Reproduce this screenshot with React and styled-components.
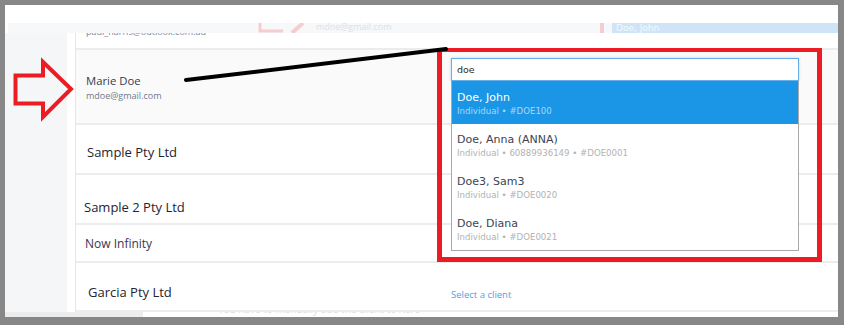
import React from "react";
import styled, { createGlobalStyle } from "styled-components";

const GlobalStyle = createGlobalStyle`
  html, body { margin: 0; padding: 0; background: #fff; }
  body { font-family: "Open Sans", "DejaVu Sans", sans-serif; }
`;

const Frame = styled.div`
  position: relative;
  width: 844px;
  height: 325px;
  box-sizing: border-box;
  border-style: solid;
  border-color: #878787;
  border-width: 5px 6px 8px 5px;
  background: #fff;
  padding-top: 18px;
  display: flex;
  flex-direction: column;
  overflow: hidden;
`;

const GhostStrip = styled.div`
  height: 10px;
  margin-left: 3px;
  background: #f6f8fa;
  display: flex;
  align-items: flex-start;
  overflow: hidden;
`;

const GhostMark = styled.svg`
  flex: none;
  margin-left: 250px;
  width: 47px;
  height: 10px;
`;

const GhostText = styled.span`
  margin-left: 11px;
  font-size: 9px;
  line-height: 8px;
  color: #dde1e6;
`;

const GhostBar = styled.div`
  margin-left: auto;
  width: 4px;
  height: 10px;
  background: #f6cdcf;
`;

const GhostBlue = styled.div`
  margin-left: 8px;
  width: 226px;
  height: 10px;
  background: #cfe5f7;
  color: #f3f9fe;
  font-family: "DejaVu Sans", sans-serif;
  font-size: 9px;
  line-height: 10px;
  padding-left: 4px;
  box-sizing: border-box;
`;

const Body = styled.div`
  display: flex;
  height: 279px;
`;

const Sidebar = styled.div`
  width: 62px;
  background: #f5f6f8;
  flex: none;
`;

const Gap = styled.div`
  width: 8px;
  flex: none;
`;

const Content = styled.div`
  flex: 1;
  border-left: 1px solid #e6e6e6;
  display: flex;
  flex-direction: column;
`;

const Row = styled.div`
  position: relative;
  display: grid;
  grid-template-columns: 375px 1fr;
  height: ${(p) => p.$h}px;
  background: ${(p) => p.$bg || "#fff"};
  border-bottom: 2px solid #ececec;
  overflow: ${(p) => (p.$clip ? "hidden" : "visible")};
  flex: none;
`;

const LeftCell = styled.div`
  padding-left: ${(p) => p.$indent}px;
  padding-top: ${(p) => p.$pt}px;
`;

const RightCell = styled.div`
  position: relative;
  padding-top: ${(p) => p.$pt || 0}px;
`;

const Company = styled.div`
  font-size: ${(p) => p.$size || 13}px;
  line-height: 18px;
  color: ${(p) => p.$color || "#1f2430"};
`;

const PersonName = styled.div`
  font-size: 11.3px;
  line-height: 14px;
  font-weight: 500;
  color: #343a55;
`;

const PersonEmail = styled.div`
  margin-top: 1px;
  font-size: 9px;
  line-height: 14px;
  color: #6f7b8f;
`;

const ClippedEmail = styled.div`
  margin-top: -7px;
  font-size: 9px;
  line-height: 12px;
  color: #7a8699;
`;

const LinkText = styled.span`
  font-size: 9.5px;
  line-height: 14px;
  color: #4a9fe8;
`;

const Combo = styled.div`
  position: relative;
  margin-top: 8px;
  width: 348px;
`;

const SearchInput = styled.div`
  box-sizing: border-box;
  height: 23px;
  border: 1px solid #66afe9;
  box-shadow: 0 0 2px rgba(102, 175, 233, 0.6);
  background: #fff;
  padding-left: 5px;
  font-family: "DejaVu Sans", sans-serif;
  font-size: 9.5px;
  line-height: 21px;
  color: #2b2b2b;
`;

const List = styled.div`
  position: absolute;
  top: 100%;
  left: 0;
  width: 348px;
  box-sizing: border-box;
  border: 1px solid #a9a9a9;
  border-top: none;
  background: #fff;
  z-index: 5;
`;

const Item = styled.div`
  height: ${(p) => (p.$first ? 43 : 42)}px;
  box-sizing: border-box;
  padding: ${(p) => (p.$first ? 10 : 9)}px 0 0 5px;
  background: ${(p) => (p.$active ? "#1b96e6" : "#fff")};
  font-family: "DejaVu Sans", sans-serif;
`;

const ItemName = styled.div`
  font-size: 11px;
  line-height: 14px;
  color: ${(p) => (p.$active ? "#ffffff" : "#3a4454")};
`;

const ItemMeta = styled.div`
  font-size: 8.6px;
  line-height: 12px;
  color: ${(p) => (p.$active ? "#a9d6f7" : "#b2b2b2")};
`;

const Footer = styled.div`
  height: 5px;
  display: flex;
  overflow: hidden;
`;

const FooterShade = styled.div`
  width: 138px;
  background: #ececec;
`;

const FooterText = styled.div`
  margin-left: 75px;
  margin-top: -8px;
  font-size: 10px;
  line-height: 10px;
  color: #dadde1;
  white-space: nowrap;
`;

const RedBox = styled.div`
  position: absolute;
  left: 432px;
  top: 43px;
  width: 385px;
  height: 214px;
  box-sizing: border-box;
  border: 5px solid #ed1c24;
  border-top-width: 4px;
  pointer-events: none;
  z-index: 10;
`;

const Overlay = styled.svg`
  position: absolute;
  left: -5px;
  top: -5px;
  width: 844px;
  height: 325px;
  pointer-events: none;
  z-index: 11;
`;

const results = [
  { name: "Doe, John", meta: "Individual • #DOE100", active: true },
  { name: "Doe, Anna (ANNA)", meta: "Individual • 60889936149 • #DOE0001" },
  { name: "Doe3, Sam3", meta: "Individual • #DOE0020" },
  { name: "Doe, Diana", meta: "Individual • #DOE0021" },
];

export default function App() {
  return (
    <>
      <GlobalStyle />
      <Frame>
        <GhostStrip>
          <GhostMark viewBox="0 0 47 10">
            <path d="M2 0 V8 H25" stroke="#f6cdcf" strokeWidth="3" fill="none" />
            <path d="M34 10 L45 0" stroke="#f6cdcf" strokeWidth="4" fill="none" />
          </GhostMark>
          <GhostText>mdoe@gmail.com</GhostText>
          <GhostBar />
          <GhostBlue>Doe, John</GhostBlue>
        </GhostStrip>
        <Body>
          <Sidebar />
          <Gap />
          <Content>
            <Row $h={15} $clip>
              <LeftCell $indent={10} $pt={0}>
                <ClippedEmail>paul_harris@outlook.com.au</ClippedEmail>
              </LeftCell>
              <RightCell />
            </Row>
            <Row $h={73} $bg="#fafafa">
              <LeftCell $indent={10} $pt={24}>
                <PersonName>Marie Doe</PersonName>
                <PersonEmail>mdoe@gmail.com</PersonEmail>
              </LeftCell>
              <RightCell>
                <Combo>
                  <SearchInput>doe</SearchInput>
                  <List>
                    {results.map((r, i) => (
                      <Item key={r.name} $active={r.active} $first={i === 0}>
                        <ItemName $active={r.active}>{r.name}</ItemName>
                        <ItemMeta $active={r.active}>{r.meta}</ItemMeta>
                      </Item>
                    ))}
                  </List>
                </Combo>
              </RightCell>
            </Row>
            <Row $h={48}>
              <LeftCell $indent={11} $pt={18}>
                <Company>Sample Pty Ltd</Company>
              </LeftCell>
              <RightCell />
            </Row>
            <Row $h={48}>
              <LeftCell $indent={8} $pt={23}>
                <Company>Sample 2 Pty Ltd</Company>
              </LeftCell>
              <RightCell />
            </Row>
            <Row $h={36}>
              <LeftCell $indent={9} $pt={10}>
                <Company $size={12} $color="#3a3550">Now Infinity</Company>
              </LeftCell>
              <RightCell />
            </Row>
            <Row $h={47}>
              <LeftCell $indent={12} $pt={20}>
                <Company>Garcia Pty Ltd</Company>
              </LeftCell>
              <RightCell $pt={18}>
                <LinkText>Select a client</LinkText>
              </RightCell>
            </Row>
          </Content>
        </Body>
        <Footer>
          <FooterShade />
          <FooterText>You have to manually add the client to Xero</FooterText>
        </Footer>
        <RedBox />
        <Overlay viewBox="0 0 844 325">
          <line x1="186" y1="80" x2="446" y2="49" stroke="#000" strokeWidth="4" strokeLinecap="round" />
          <polygon
            points="15.5,75.5 43,75.5 43,62 71,89 43,117 43,103.5 15.5,103.5"
            fill="none"
            stroke="#ed1c24"
            strokeWidth="4"
            strokeLinejoin="miter"
          />
        </Overlay>
      </Frame>
    </>
  );
}
